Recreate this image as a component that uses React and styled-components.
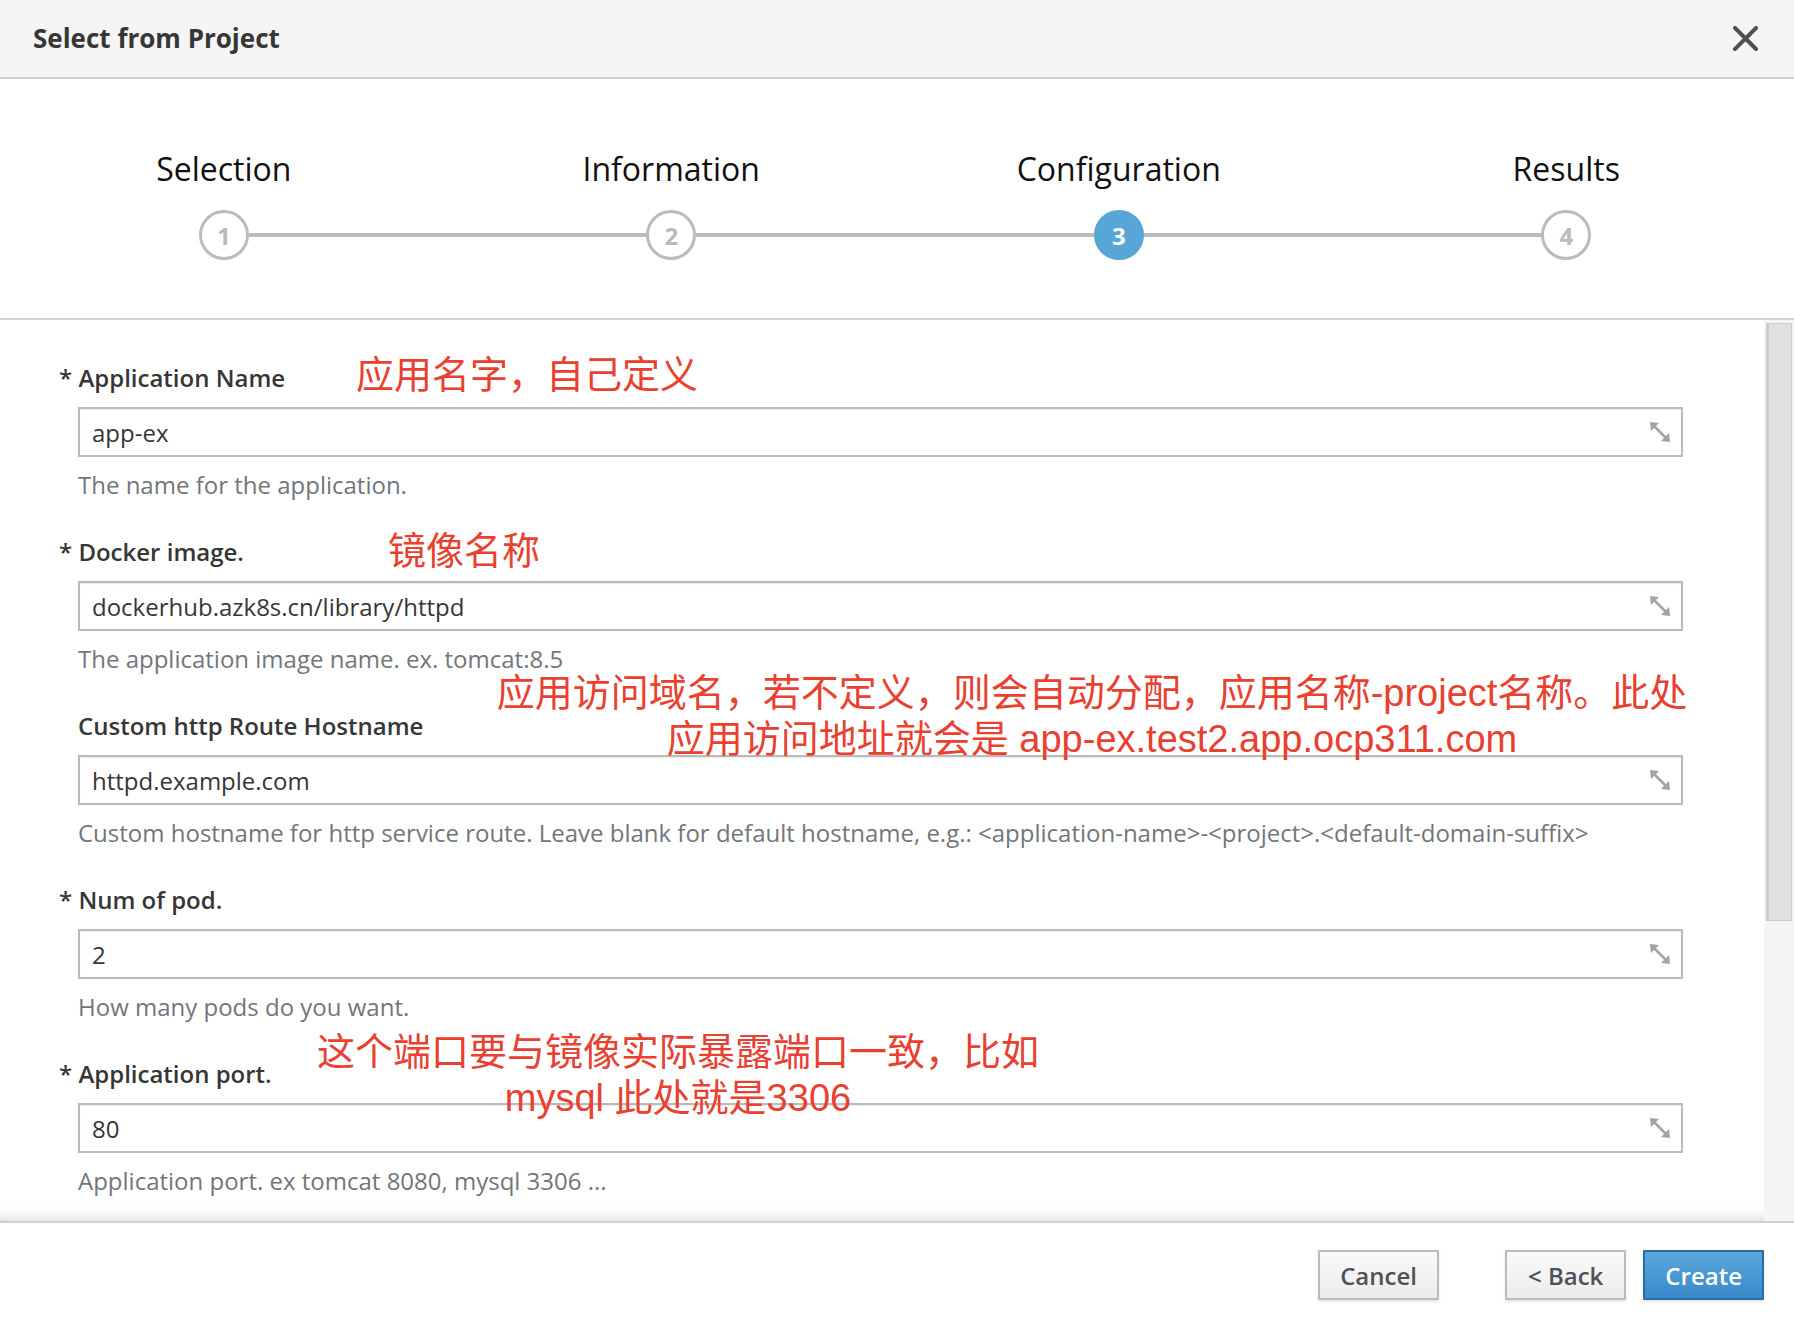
import styled, { createGlobalStyle } from "styled-components";

const GlobalStyle = createGlobalStyle`
  html, body {
    margin: 0;
    padding: 0;
    background: #ffffff;
  }
  body {
    font-family: "Open Sans", "Noto Sans", sans-serif;
    color: #363636;
  }
  * {
    box-sizing: border-box;
  }
`;

const Modal = styled.div`
  position: relative;
  width: 1794px;
  height: 1336px;
  display: flex;
  flex-direction: column;
  background: #fff;
  overflow: hidden;
`;

const Header = styled.div`
  height: 79px;
  flex: none;
  display: flex;
  align-items: center;
  justify-content: space-between;
  padding: 0 36px 2px 33px;
  background: #f5f5f5;
  border-bottom: 2px solid #d1d1d1;
`;

const Title = styled.h1`
  margin: 0;
  font-size: 26px;
  font-weight: 700;
  color: #363636;
`;

const CloseButton = styled.button`
  width: 25px;
  height: 25px;
  padding: 0;
  border: none;
  background: none;
  cursor: pointer;
  display: flex;
  margin-top: 2px;
`;

const Steps = styled.div`
  flex: none;
  height: 241px;
  display: grid;
  grid-template-columns: repeat(4, 1fr);
  padding: 70px 4px 0 0;
  border-bottom: 2px solid #d1d1d1;
`;

const Step = styled.div`
  display: flex;
  flex-direction: column;
  align-items: center;
`;

const StepTitle = styled.div`
  font-size: 32px;
  line-height: 40px;
  color: #111;
  margin-bottom: 21px;
`;

const CircleRow = styled.div`
  width: 100%;
  display: flex;
  align-items: center;
`;

const HalfLine = styled.div`
  flex: 1;
  height: 4px;
  background: ${(p) => (p.$hidden ? "transparent" : "#bbbbbb")};
`;

const Circle = styled.div`
  width: 50px;
  height: 50px;
  flex: none;
  border-radius: 50%;
  display: flex;
  align-items: center;
  justify-content: center;
  font-size: 24px;
  font-weight: 700;
  background: ${(p) => (p.$active ? "#58a5d8" : "#fff")};
  border: 3px solid ${(p) => (p.$active ? "#58a5d8" : "#bbbbbb")};
  color: ${(p) => (p.$active ? "#fff" : "#bbbbbb")};
`;

const Body = styled.div`
  flex: 1;
  display: flex;
  min-height: 0;
`;

const FormArea = styled.div`
  flex: 1;
  padding: 41px 81px 0 78px;
  box-shadow: inset 0 -16px 14px -14px rgba(0, 0, 0, 0.16);
`;

const Field = styled.div`
  margin-bottom: 33px;
`;

const Label = styled.div`
  font-size: 24px;
  line-height: 34px;
  font-weight: 600;
  color: #363636;
  margin-bottom: 12px;
  text-indent: ${(p) => (p.$required ? "-19px" : "0")};
`;

const InputBox = styled.div`
  height: 50px;
  display: flex;
  align-items: center;
  padding: 0 10px 0 12px;
  border: 2px solid #bababa;
  box-shadow: inset 0 1px 1px rgba(3, 3, 3, 0.08);
  background: #fff;
`;

const Input = styled.input`
  flex: 1;
  border: none;
  outline: none;
  padding: 0;
  font-family: "Open Sans", sans-serif;
  font-size: 24px;
  color: #363636;
  background: transparent;
`;

const Help = styled.div`
  margin-top: 11px;
  font-size: 24px;
  line-height: 34px;
  color: #72767b;
`;

const ScrollTrack = styled.div`
  width: 30px;
  flex: none;
  background: #f5f5f5;
  padding: 3px 2px 0;
`;

const ScrollThumb = styled.div`
  height: 598px;
  background: #e1e1e1;
  border: 1px solid #cbcbcb;
  border-left: 3px solid #cbcbcb;
`;

const Footer = styled.div`
  flex: none;
  height: 115px;
  border-top: 2px solid #cfcfcf;
  display: flex;
  justify-content: flex-end;
  align-items: flex-start;
  padding: 27px 30px 0 0;
`;

const Button = styled.button`
  height: 50px;
  padding: 0 ${(p) => p.$pad || 20}px;
  margin-left: ${(p) => p.$gap || 0}px;
  font-family: "Open Sans", sans-serif;
  font-size: 24px;
  font-weight: 600;
  border-radius: 1px;
  cursor: pointer;
  color: ${(p) => (p.$primary ? "#fff" : "#4d5258")};
  background: ${(p) =>
    p.$primary
      ? "linear-gradient(#5aa8dd, #3a88c8)"
      : "linear-gradient(#fafafa, #ececec)"};
  border: 2px solid ${(p) => (p.$primary ? "#2b6ca3" : "#bbbbbb")};
  box-shadow: 0 2px 3px rgba(3, 3, 3, 0.1);
`;

const Note = styled.div`
  position: absolute;
  left: ${(p) => p.$x}px;
  top: ${(p) => p.$y}px;
  width: ${(p) => (p.$w ? `${p.$w}px` : "auto")};
  text-align: ${(p) => (p.$w ? "center" : "left")};
  white-space: nowrap;
  font-family: "Liberation Sans", "Noto Sans CJK SC", sans-serif;
  font-size: 38px;
  line-height: 46px;
  color: #e9402f;
`;

function ExpandIcon() {
  return (
    <svg width="22" height="22" viewBox="0 0 22 22">
      <path d="M1 1 L10 2 L2 10 Z" fill="#a3a3a3" />
      <path d="M21 21 L12 20 L20 12 Z" fill="#a3a3a3" />
      <line x1="5" y1="5" x2="17" y2="17" stroke="#a3a3a3" strokeWidth="2.5" />
    </svg>
  );
}

const steps = ["Selection", "Information", "Configuration", "Results"];

const fields = [
  { label: "Application Name", required: true, value: "app-ex", help: "The name for the application." },
  { label: "Docker image.", required: true, value: "dockerhub.azk8s.cn/library/httpd", help: "The application image name. ex. tomcat:8.5" },
  {
    label: "Custom http Route Hostname",
    value: "httpd.example.com",
    help: "Custom hostname for http service route. Leave blank for default hostname, e.g.: <application-name>-<project>.<default-domain-suffix>",
  },
  { label: "Num of pod.", required: true, value: "2", help: "How many pods do you want." },
  { label: "Application port.", required: true, value: "80", help: "Application port. ex tomcat 8080, mysql 3306 ..." },
];

export default function App() {
  return (
    <Modal>
      <GlobalStyle />
      <Header>
        <Title>Select from Project</Title>
        <CloseButton aria-label="Close">
          <svg width="25" height="25" viewBox="0 0 25 25">
            <path d="M2 2 L23 23 M23 2 L2 23" stroke="#4f4f4f" strokeWidth="4" strokeLinecap="square" />
          </svg>
        </CloseButton>
      </Header>

      <Steps>
        {steps.map((s, i) => (
          <Step key={s}>
            <StepTitle>{s}</StepTitle>
            <CircleRow>
              <HalfLine $hidden={i === 0} />
              <Circle $active={i === 2}>{i + 1}</Circle>
              <HalfLine $hidden={i === steps.length - 1} />
            </CircleRow>
          </Step>
        ))}
      </Steps>

      <Body>
        <FormArea>
          {fields.map((f) => (
            <Field key={f.label}>
              <Label $required={f.required}>{f.required ? `* ${f.label}` : f.label}</Label>
              <InputBox>
                <Input readOnly value={f.value} />
                <ExpandIcon />
              </InputBox>
              <Help>{f.help}</Help>
            </Field>
          ))}
        </FormArea>
        <ScrollTrack>
          <ScrollThumb />
        </ScrollTrack>
      </Body>

      <Footer>
        <Button $pad={20}>Cancel</Button>
        <Button $gap={66} $pad={21}>&lt; Back</Button>
        <Button $gap={17} $pad={20} $primary>
          Create
        </Button>
      </Footer>

      <Note $x={356} $y={352}>应用名字，自己定义</Note>
      <Note $x={388} $y={528}>镜像名称</Note>
      <Note $x={492} $y={670} $w={1200}>
        应用访问域名，若不定义，则会自动分配，应用名称-project名称。此处
        <br />
        应用访问地址就会是 app-ex.test2.app.ocp311.com
      </Note>
      <Note $x={278} $y={1029} $w={800}>
        这个端口要与镜像实际暴露端口一致，比如
        <br />
        mysql 此处就是3306
      </Note>
    </Modal>
  );
}
